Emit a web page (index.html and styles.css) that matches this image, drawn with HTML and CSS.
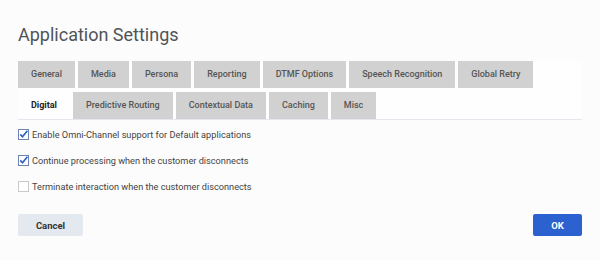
FILE: index.html
```html
<!DOCTYPE html>
<html lang="en">
<head>
    <meta charset="UTF-8">
    <title>Application Settings</title>
    <link rel="stylesheet" href="styles.css">
</head>
<body>
    <div class="dialog">
        <h1 class="title">Application Settings</h1>

        <div class="tabs">
            <div class="tab-row">
                <div class="tab">General</div>
                <div class="tab">Media</div>
                <div class="tab">Persona</div>
                <div class="tab">Reporting</div>
                <div class="tab">DTMF Options</div>
                <div class="tab">Speech Recognition</div>
                <div class="tab">Global Retry</div>
            </div>
            <div class="tab-row">
                <div class="tab active">Digital</div>
                <div class="tab">Predictive Routing</div>
                <div class="tab">Contextual Data</div>
                <div class="tab">Caching</div>
                <div class="tab">Misc</div>
            </div>
        </div>

        <div class="options">
            <label class="option">
                <svg class="check" width="11" height="11" viewBox="0 0 11 11">
                    <rect x="0.5" y="0.5" width="10" height="10" fill="#fff" stroke="#6f84b5"/>
                    <path d="M2.3 5.4 L4.5 7.8 L9.4 1.8" fill="none" stroke="#2f5fc9" stroke-width="1.7"/>
                </svg>
                Enable Omni-Channel support for Default applications
            </label>
            <label class="option">
                <svg class="check" width="11" height="11" viewBox="0 0 11 11">
                    <rect x="0.5" y="0.5" width="10" height="10" fill="#fff" stroke="#6f84b5"/>
                    <path d="M2.3 5.4 L4.5 7.8 L9.4 1.8" fill="none" stroke="#2f5fc9" stroke-width="1.7"/>
                </svg>
                Continue processing when the customer disconnects
            </label>
            <label class="option">
                <svg class="check" width="11" height="11" viewBox="0 0 11 11">
                    <rect x="0.5" y="0.5" width="10" height="10" fill="#fff" stroke="#c9c9c9"/>
                </svg>
                Terminate interaction when the customer disconnects
            </label>
        </div>

        <div class="actions">
            <button class="btn btn-cancel">Cancel</button>
            <button class="btn btn-ok">OK</button>
        </div>
    </div>
</body>
</html>
```

FILE: styles.css
```css
* {
    margin: 0;
    padding: 0;
    box-sizing: border-box;
}

body {
    font-family: Roboto, "Liberation Sans", sans-serif;
    background: #fcfcfc;
    color: #444;
}

.dialog {
    padding: 25px 18px 0;
}

.title {
    font-size: 18px;
    font-weight: 400;
    color: #505459;
    line-height: 20px;
    margin-bottom: 16px;
}

.tabs {
    background: #fefefe;
    border-bottom: 1px solid #e4e8ee;
}

.tab-row {
    display: flex;
    gap: 3px;
    margin-bottom: 4px;
}

.tab-row:last-child {
    margin-bottom: 0;
}

.tab {
    flex-shrink: 0;
    white-space: nowrap;
    background: #d1d1d1;
    height: 27px;
    line-height: 27px;
    padding: 0 13px;
    font-size: 9px;
    font-weight: 500;
    color: #555;
}

.tab.active {
    background: transparent;
    color: #222;
    font-weight: 700;
}

.options {
    padding-top: 6px;
    display: flex;
    flex-direction: column;
    gap: 10px;
}

.option {
    display: flex;
    align-items: center;
    gap: 3px;
    height: 16px;
    font-size: 9.2px;
    color: #444;
}

.check {
    flex-shrink: 0;
}

.actions {
    display: flex;
    justify-content: space-between;
    margin-top: 20px;
}

.btn {
    height: 22px;
    border: none;
    border-radius: 2px;
    font-family: Roboto, "Liberation Sans", sans-serif;
    font-size: 9.5px;
    font-weight: 700;
}

.btn-cancel {
    width: 65px;
    background: #e4e9f0;
    color: #333;
}

.btn-ok {
    width: 49px;
    background: #2b62d0;
    color: #fff;
}
```
